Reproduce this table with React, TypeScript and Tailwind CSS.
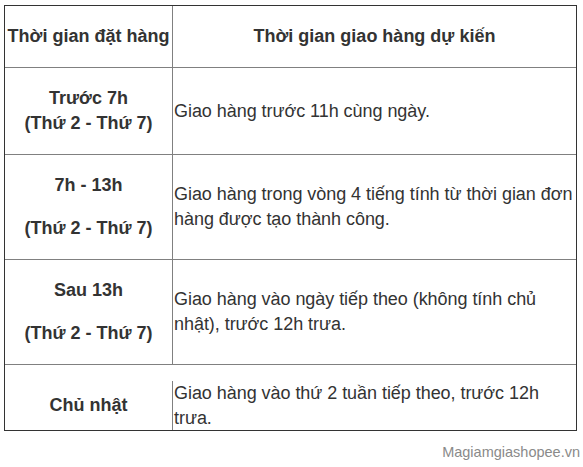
export default function App() {
  const rows = [
    {
      left: ["Trước 7h", "(Thứ 2 - Thứ 7)"],
      gap: false,
      right: "Giao hàng trước 11h cùng ngày.",
      h: "h-[87px]",
    },
    {
      left: ["7h - 13h", "(Thứ 2 - Thứ 7)"],
      gap: true,
      right: "Giao hàng trong vòng 4 tiếng tính từ thời gian đơn hàng được tạo thành công.",
      h: "h-[105px]",
    },
    {
      left: ["Sau 13h", "(Thứ 2 - Thứ 7)"],
      gap: true,
      right: "Giao hàng vào ngày tiếp theo (không tính chủ nhật), trước 12h trưa.",
      h: "h-[105px]",
    },
    {
      left: ["Chủ nhật"],
      gap: false,
      right: "Giao hàng vào thứ 2 tuần tiếp theo, trước 12h trưa.",
      h: "h-[65px] pt-[16px]",
    },
  ];

  return (
    <div className="min-h-screen w-full bg-white pl-[4px] pt-[5px] font-['Liberation_Sans',Arial,sans-serif] text-[18px] text-[#333333]">
      <div className="w-[573px] border border-[#333333]">
        {/* header */}
        <div className="flex h-[62px] border-b border-[#808080]">
          <div className="flex w-[168px] shrink-0 items-center justify-center border-r border-[#808080] font-bold">
            Thời gian đặt hàng
          </div>
          <div className="flex flex-1 items-center justify-center font-bold">
            Thời gian giao hàng dự kiến
          </div>
        </div>

        {rows.map((row, i) => (
          <div
            key={i}
            className={`flex ${row.h} ${i < rows.length - 1 ? "border-b border-[#808080]" : ""}`}
          >
            <div
              className={`flex w-[168px] shrink-0 flex-col items-center justify-center border-r border-[#808080] text-center font-bold leading-[25px] ${row.gap ? "gap-[18px]" : ""}`}
            >
              {row.left.map((t) => (
                <p key={t}>{t}</p>
              ))}
            </div>
            <div className="flex flex-1 items-center pl-[1px] leading-[25px] tracking-[-0.05px]">
              <p>{row.right}</p>
            </div>
          </div>
        ))}
      </div>
      <div className="flex w-[576px] justify-end pt-[12px] text-[14.5px] leading-[18px] text-[#8a8a8a]">
        Magiamgiashopee.vn
      </div>
    </div>
  );
}
